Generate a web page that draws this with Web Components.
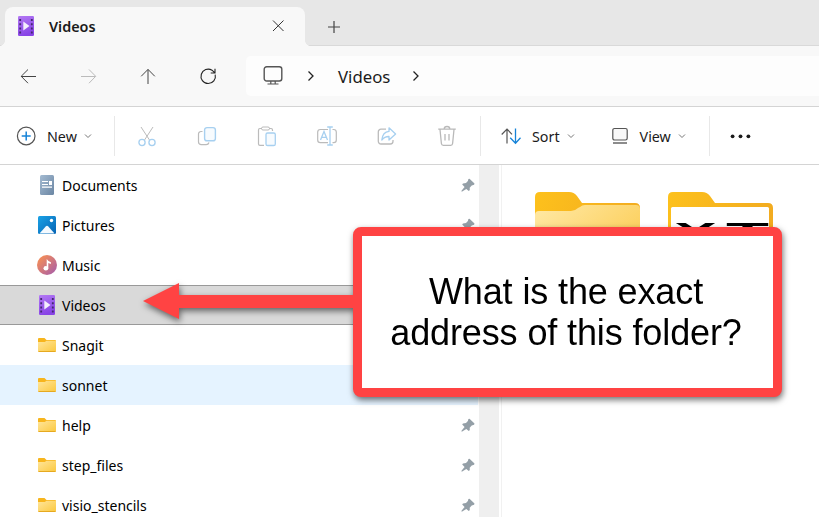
<!DOCTYPE html>
<html lang="en">
<head>
<meta charset="utf-8">
<title>Videos</title>
<style>
  html, body { margin: 0; height: 100%; overflow: hidden; background: #fff; }
  body { font-family: "Noto Sans", "Open Sans", sans-serif; color: #1b1b1b; }
</style>
</head>
<body>
<explorer-window>
  <explorer-tab slot="tab" label="Videos"></explorer-tab>
  <address-bar slot="nav" folder="Videos"></address-bar>
  <command-bar slot="commands"></command-bar>
  <nav-item slot="tree" icon="document" pinned>Documents</nav-item>
  <nav-item slot="tree" icon="picture" pinned>Pictures</nav-item>
  <nav-item slot="tree" icon="music" pinned>Music</nav-item>
  <nav-item slot="tree" icon="video" selected>Videos</nav-item>
  <nav-item slot="tree" icon="folder">Snagit</nav-item>
  <nav-item slot="tree" icon="folder" hovered>sonnet</nav-item>
  <nav-item slot="tree" icon="folder" pinned>help</nav-item>
  <nav-item slot="tree" icon="folder" pinned>step_files</nav-item>
  <nav-item slot="tree" icon="folder" pinned>visio_stencils</nav-item>
  <folder-tile slot="files"></folder-tile>
  <folder-tile slot="files" preview></folder-tile>
</explorer-window>
<callout-note>What is the exact<br>address of this folder?</callout-note>

<script>
const ICONS = {
  back: [20, '<path d="M3 10.5H18M10 3.5 3.2 10.3 10 17.2" stroke="#444"/>'],
  forward: [20, '<path d="M3 10.5h14.5M11 3.5l6.7 6.8-6.7 6.9" stroke="#bbb"/>'],
  up: [20, '<path d="M10 18V3.5M3.2 10.3 10 3.4l6.8 6.9" stroke="#444"/>'],
  refresh: [20, '<path d="M17.2 8.6A7.2 7.2 0 1 1 14 4.2L16.6 6.6M17 2.7V7H12.7" stroke="#222" stroke-width="1.1"/>'],
  close: [14, '<path d="M2 1.5 12.5 12M12.5 1.5 2 12" stroke="#333"/>'],
  plus: [14, '<path d="M7 1v12M1 7h12" stroke="#444" stroke-width="1.2"/>'],
  monitor: [20, '<rect x="1.2" y=".7" width="17.6" height="14.3" rx="2.5" stroke="#555" stroke-width="1.4"/><path d="M7.8 15v3M12.2 15v3M4.5 18h11" stroke="#555" stroke-width="1.2"/>'],
  chevron: [12, '<path d="m3.5 1.5 4.5 4.5-4.5 4.5" stroke="#222" stroke-width="1.3"/>'],
  down: [8, '<path d="m1 2.5 3 3 3-3" stroke="#777"/>'],
  create: [20, '<circle cx="10.2" cy="10" r="8.8" stroke="#555" stroke-width="1.2"/><path d="M10.2 5.5v9M5.7 10h9" stroke="#1683d8" stroke-width="1.5"/>'],
  cut: [20, '<path d="m4 1 8.5 13M16 1 7.5 14" stroke="#bbb"/><circle cx="5" cy="16.5" r="3.1" stroke="#a7d0f0" stroke-width="1.3"/><circle cx="15" cy="16.5" r="3.1" stroke="#a7d0f0" stroke-width="1.3"/>'],
  copy: [20, '<path d="M5.5 5.5H4A2.5 2.5 0 0 0 1.5 8v8A2.8 2.8 0 0 0 4.3 18.6H9A3 3 0 0 0 12 16.5" stroke="#bbb" stroke-width="1.2"/><rect x="7.6" y="1.6" width="10.8" height="13.2" rx="2.4" stroke="#a7d0f0" stroke-width="1.4" fill="#f7fbfe"/>'],
  paste: [20, '<path d="M5 2.5H2.9A1.5 1.5 0 0 0 1.5 4v14a1.5 1.5 0 0 0 1.4 1.4H7M12 2.5h2.1A1.5 1.5 0 0 1 15.5 4v1" stroke="#bbb" stroke-width="1.2"/><rect x="4.5" y="1" width="8" height="3" rx="1.5" stroke="#bbb"/><rect x="9" y="7" width="9.3" height="12.5" rx="1.6" stroke="#a7d0f0" stroke-width="1.3" fill="#f7fbfe"/>'],
  rename: [20, '<path d="M11 3.5H3.3A2.6 2.6 0 0 0 .7 6v8a2.6 2.6 0 0 0 2.6 2.6H11M15.5 3.5h1.2A2.6 2.6 0 0 1 19.3 6v8a2.6 2.6 0 0 1-2.6 2.6h-1.2" stroke="#bbb" stroke-width="1.2"/><path d="M13 1v18M10.2 1h5.6M10.2 19h5.6M3.5 14 7 5.5l3.5 8.5M4.7 11.3h4.6" stroke="#a7d0f0" stroke-width="1.3"/>'],
  share: [20, '<path d="M9 3.2H4A2.7 2.7 0 0 0 1.3 6v9.3A2.7 2.7 0 0 0 4 18h9.3a2.7 2.7 0 0 0 2.7-2.7V14" stroke="#bbb" stroke-width="1.3"/><path d="M12 1.8 18.6 8 12 14V10.5Q7.8 10.3 4.8 14 5.7 6 12 5.4Z" stroke="#a7d0f0" stroke-width="1.3" stroke-linejoin="round"/>'],
  trash: [20, '<path d="M1.2 3.2h17.6M7.2 3a2.8 2.5 0 0 1 5.6 0M3 3.5l1.4 14q.2 1.8 1.9 1.8h7.4q1.7 0 1.9-1.8l1.4-14M8 8v6.5M12 8v6.5" stroke="#b9b9b9" stroke-width="1.3"/>'],
  sort: [20, '<path d="M6 17.5V3M.7 8.5 6 3l5 5.3" stroke="#555" stroke-width="1.2"/><path d="M14.5 2.5v14.5M9.2 11.8l5.3 5.4 5-5.4" stroke="#1683d8" stroke-width="1.3"/>'],
  view: [18, '<rect x="1.8" y="1.5" width="14.4" height="11.5" rx="1.7" stroke="#555" stroke-width="1.2" fill="#f8f8f8"/><path d="M2 16h14" stroke="#666" stroke-width="1.5"/>'],
  more: [20, '<g fill="#1b1b1b"><circle cx="2.6" cy="10.3" r="1.9"/><circle cx="10.5" cy="10.3" r="1.9"/><circle cx="18.4" cy="10.3" r="1.9"/></g>'],
  pin: [14, '<path d="m8.5.8 5 4.8-.4 1.2-2.4.8-2 2.2.1 2.3-1 .9-2.5-2L1.2 13.6l-.8-.1.1-.8L3.6 9 1.2 6.5l.8-1.1 3-.4 1.9-2L7.4 1Z" fill="#949fa7"/>'],
  document: [20, '<linearGradient id="g" x2="1" y2="1"><stop stop-color="#a4bbd2"/><stop offset="1" stop-color="#6b86a3"/></linearGradient><rect x="3" width="14" height="20" rx="1.5" fill="url(#g)"/><path d="M5 6.5h6M5 9.5h6M5 12.2h10" stroke="#fff" stroke-width="1.2"/><path d="M12 6h3v4h-3z" fill="#fff"/>'],
  picture: [20, '<linearGradient id="g" x2="1" y2="1"><stop stop-color="#1aa2e6"/><stop offset="1" stop-color="#0864b4"/></linearGradient><rect x="1" y="1" width="18" height="18" rx="1.5" fill="url(#g)"/><path d="m2.5 18.5 6.2-7q1.3-1.3 2.6 0l6.2 7z" fill="#f4faff"/><circle cx="14.5" cy="5.5" r="1.7" fill="#fff"/>'],
  music: [20, '<linearGradient id="g" x2="1" y2="1"><stop offset=".2" stop-color="#ed895f"/><stop offset="1" stop-color="#a25aae"/></linearGradient><circle cx="10" cy="10" r="10" fill="url(#g)"/><ellipse cx="8.9" cy="13.2" rx="2.4" ry="2.2" fill="#fff"/><path d="M9.7 13V4q1.5 2.5 4.2 3.3v1.8L11.3 8v5z" fill="#fff"/>'],
  video: [20, '<linearGradient id="g" x2="0.3" y2="1"><stop stop-color="#b47af4"/><stop offset="1" stop-color="#8844e6"/></linearGradient><rect x="2" width="16" height="20" rx="1.2" fill="url(#g)"/><path d="M4.2 3v15M15.8 3v15" stroke="#45296f" stroke-width="1.8" stroke-dasharray="2 2.2"/><path d="m7.3 5.5 6.2 4.5-6.2 4.5z" fill="#f4eefc"/>'],
  folder: [20, '<linearGradient id="g" x2="1" y2="1"><stop stop-color="#ffe69c"/><stop offset="1" stop-color="#fbc83e"/></linearGradient><path d="M1 4q0-1 1-1h5.5l2 2H18q1 0 1 1v5H1z" fill="#f7b51d"/><path d="M1 7h6.8L9.5 5.8H19V16q0 1-1 1H2q-1 0-1-1z" fill="url(#g)"/><path d="M1.5 16.5h17" stroke="#e6a920"/>']
};

class UiIcon extends HTMLElement {
  constructor() {
    super();
    this.attachShadow({ mode: 'open' });
  }

  connectedCallback() {
    const [size, markup] = ICONS[this.getAttribute('name')];
    this.shadowRoot.innerHTML = `
      <style>
        :host { display: block; flex: none; width: ${size}px; height: ${size}px; }
        svg { display: block; overflow: visible; }
      </style>
      <svg width="${size}" height="${size}" viewBox="0 0 ${size} ${size}" fill="none">${markup}</svg>
    `;
  }
}

class ExplorerTab extends HTMLElement {
  constructor() {
    super();
    this.attachShadow({ mode: 'open' });
  }

  connectedCallback() {
    this.shadowRoot.innerHTML = `
      <style>
        :host { display: flex; height: 46px; box-sizing: border-box; padding: 7px 0 0 5px; background: #e7e7e7; box-shadow: inset 0 -1px #d9d9d9; }
        .tab {
          position: relative; display: flex; align-items: center; box-sizing: border-box;
          width: 300px; padding: 0 20px 1px 11px; border-radius: 8px 8px 0 0; background: #f8f8f8;
        }
        /* flared feet joining the tab to the bar below */
        .tab::before, .tab::after { content: ""; position: absolute; bottom: 0; width: 5px; height: 5px; }
        .tab::before { left: -5px; background: radial-gradient(circle at 0 0, transparent 4.5px, #f8f8f8 5px); }
        .tab::after { right: -5px; background: radial-gradient(circle at 100% 0, transparent 4.5px, #f8f8f8 5px); }
        .label { flex: 1; margin-left: 13px; font-size: 14.4px; font-weight: 600; }
        .add { margin: 13px 0 0 22px; }
      </style>
      <div class="tab">
        <ui-icon name="video"></ui-icon>
        <span class="label">${this.getAttribute('label')}</span>
        <ui-icon name="close"></ui-icon>
      </div>
      <ui-icon class="add" name="plus"></ui-icon>
    `;
  }
}

class AddressBar extends HTMLElement {
  constructor() {
    super();
    this.attachShadow({ mode: 'open' });
  }

  connectedCallback() {
    this.shadowRoot.innerHTML = `
      <style>
        :host {
          display: flex; align-items: center; height: 61px; box-sizing: border-box;
          padding-left: 18px; background: #f8f8f8; border-bottom: 1px solid #d4d4d4;
        }
        .buttons { display: flex; gap: 40px; width: 228px; }
        .path {
          flex: 1; display: flex; align-items: center; height: 40px; box-sizing: border-box;
          padding-left: 17px; border-radius: 5px 0 0 5px; background: #fdfdfd;
        }
        .path ui-icon:first-child { margin-right: 22px; }
        .folder { margin: 0 20px 0 21px; font-size: 16.8px; }
      </style>
      <div class="buttons">
        <ui-icon name="back"></ui-icon>
        <ui-icon name="forward"></ui-icon>
        <ui-icon name="up"></ui-icon>
        <ui-icon name="refresh"></ui-icon>
      </div>
      <div class="path">
        <ui-icon name="monitor"></ui-icon>
        <ui-icon name="chevron"></ui-icon>
        <span class="folder">${this.getAttribute('folder')}</span>
        <ui-icon name="chevron"></ui-icon>
      </div>
    `;
  }
}

class CommandButton extends HTMLElement {
  constructor() {
    super();
    this.attachShadow({ mode: 'open' });
  }

  connectedCallback() {
    const label = this.getAttribute('label');
    this.shadowRoot.innerHTML = `
      <style>
        :host { display: flex; align-items: center; justify-content: ${label ? 'flex-start' : 'center'}; flex: none; box-sizing: border-box; }
        .label { margin: 0 7px 0 11px; padding-top: 1px; font-size: 14.3px; }
      </style>
      <ui-icon name="${this.getAttribute('icon')}"></ui-icon>
      ${label ? `<span class="label">${label}</span><ui-icon name="down"></ui-icon>` : ''}
    `;
  }
}

class CommandBar extends HTMLElement {
  constructor() {
    super();
    this.attachShadow({ mode: 'open' });
  }

  connectedCallback() {
    const actions = ['cut', 'copy', 'paste', 'rename', 'share', 'trash'];
    this.shadowRoot.innerHTML = `
      <style>
        :host { display: flex; align-items: center; height: 58px; box-sizing: border-box; padding-top: 1px; background: #fff; border-bottom: 1px solid #d4d4d4; }
        .group { display: flex; align-items: center; height: 40px; box-sizing: border-box; border-right: 1px solid #e8e8e8; }
        .new { width: 115px; padding-left: 16px; }
        .actions { width: 366px; padding-left: 2px; }
        .actions command-button { width: 60px; }
        .layout { width: 229px; padding-left: 20px; gap: 36px; }
        .more { width: 60px; }
      </style>
      <div class="group new"><command-button icon="create" label="New"></command-button></div>
      <div class="group actions">${actions.map(a => `<command-button icon="${a}"></command-button>`).join('')}</div>
      <div class="group layout">
        <command-button icon="sort" label="Sort"></command-button>
        <command-button icon="view" label="View"></command-button>
      </div>
      <command-button class="more" icon="more"></command-button>
    `;
  }
}

class NavItem extends HTMLElement {
  constructor() {
    super();
    this.attachShadow({ mode: 'open' });
  }

  connectedCallback() {
    this.shadowRoot.innerHTML = `
      <style>
        :host {
          display: flex; align-items: center; flex: none; height: 40px; box-sizing: border-box;
          padding: 0 3px 0 37px; border: solid transparent; border-width: 1px 0;
          color: #000; font-size: 14px; line-height: 20px;
        }
        :host([selected]) { background: #d9d9d9; border-color: #999; }
        :host([hovered]) { background: #e5f3ff; border-color: #e5f3ff; }
        .label { flex: 1; margin-left: 5px; padding-top: 2px; white-space: nowrap; }
      </style>
      <ui-icon name="${this.getAttribute('icon')}"></ui-icon>
      <span class="label"><slot></slot></span>
      ${this.hasAttribute('pinned') ? '<ui-icon name="pin"></ui-icon>' : ''}
    `;
  }
}

class FolderTile extends HTMLElement {
  constructor() {
    super();
    this.attachShadow({ mode: 'open' });
  }

  connectedCallback() {
    const front = `
      <path d="M0 23q0-4 4-4h32q4 0 7-3l2-1q2-2 5-2h51q4 0 4 4v66H0z" fill="url(#front)"/>`;
    const sheet = `
      <rect x="3" y="15" width="98" height="65" rx="1.5" fill="#fff"/>
      <g font-family="Liberation Sans, sans-serif" font-weight="bold" font-size="26" fill="#000" filter="url(#soft)">
        <text x="6" y="48.5" textLength="43" lengthAdjust="spacingAndGlyphs">X</text>
        <text x="58" y="48.5" textLength="43" lengthAdjust="spacingAndGlyphs">T</text>
      </g>`;
    this.shadowRoot.innerHTML = `
      <style>
        :host { display: block; width: 105px; }
        svg { display: block; }
      </style>
      <svg width="105" height="83" viewBox="0 0 105 83">
        <linearGradient id="back" x2="1" y2="0.3"><stop stop-color="#fdc11c"/><stop offset="1" stop-color="#f2ab20"/></linearGradient>
        <linearGradient id="front" x2="1" y2="0.8"><stop stop-color="#ffe9a6"/><stop offset="1" stop-color="#fbc94b"/></linearGradient>
        <filter id="soft"><feGaussianBlur stdDeviation="0.7"/></filter>
        <path d="M0 5q0-5 5-5h29q5 0 8 4l5 7h53q5 0 5 5v67H0z" fill="url(#back)"/>
        ${this.hasAttribute('preview') ? sheet : front}
      </svg>
    `;
  }
}

class ExplorerWindow extends HTMLElement {
  constructor() {
    super();
    this.attachShadow({ mode: 'open' });
  }

  connectedCallback() {
    this.shadowRoot.innerHTML = `
      <style>
        :host { display: flex; flex-direction: column; height: 100vh; overflow: hidden; }
        .content { flex: 1; display: flex; min-height: 0; }
        .tree { display: flex; flex-direction: column; width: 478px; overflow: hidden; }
        .scrollbar { width: 20px; margin: 0 2px 0 1px; background: #efefef; }
        .files { flex: 1; display: flex; align-items: flex-start; gap: 28.5px; padding: 27px 0 0 32.5px; border-left: 1px solid #f1f1f1; }
      </style>
      <slot name="tab"></slot>
      <slot name="nav"></slot>
      <slot name="commands"></slot>
      <div class="content">
        <div class="tree"><slot name="tree"></slot></div>
        <div class="scrollbar"></div>
        <div class="files"><slot name="files"></slot></div>
      </div>
    `;
  }
}

// Annotation drawn over the window: a framed note and the arrow leaving its left side
class CalloutNote extends HTMLElement {
  constructor() {
    super();
    this.attachShadow({ mode: 'open' });
  }

  connectedCallback() {
    this.shadowRoot.innerHTML = `
      <style>
        :host { position: absolute; left: 143px; top: 227px; display: flex; filter: drop-shadow(1px 3px 3px rgba(0, 0, 0, .55)); }
        svg { display: block; margin-top: 55px; }
        .box {
          display: flex; align-items: center; justify-content: center; box-sizing: border-box;
          width: 429px; height: 170px; border: 9px solid #ff4343; border-radius: 8px; background: #fff;
          font: 36px/41px "Liberation Sans", Arial, sans-serif; letter-spacing: -.12px;
          color: #000; text-align: center; white-space: nowrap;
        }
        .text { margin-right: 2px; }
      </style>
      <svg width="209.5" height="38" viewBox="0 0 209.5 38"><path d="M0 19 36 1v12h174v13H36v11z" fill="#ff4343"/></svg>
      <div class="box"><span class="text"><slot></slot></span></div>
    `;
  }
}

customElements.define('ui-icon', UiIcon);
customElements.define('explorer-tab', ExplorerTab);
customElements.define('address-bar', AddressBar);
customElements.define('command-button', CommandButton);
customElements.define('command-bar', CommandBar);
customElements.define('nav-item', NavItem);
customElements.define('folder-tile', FolderTile);
customElements.define('explorer-window', ExplorerWindow);
customElements.define('callout-note', CalloutNote);
</script>
</body>
</html>
